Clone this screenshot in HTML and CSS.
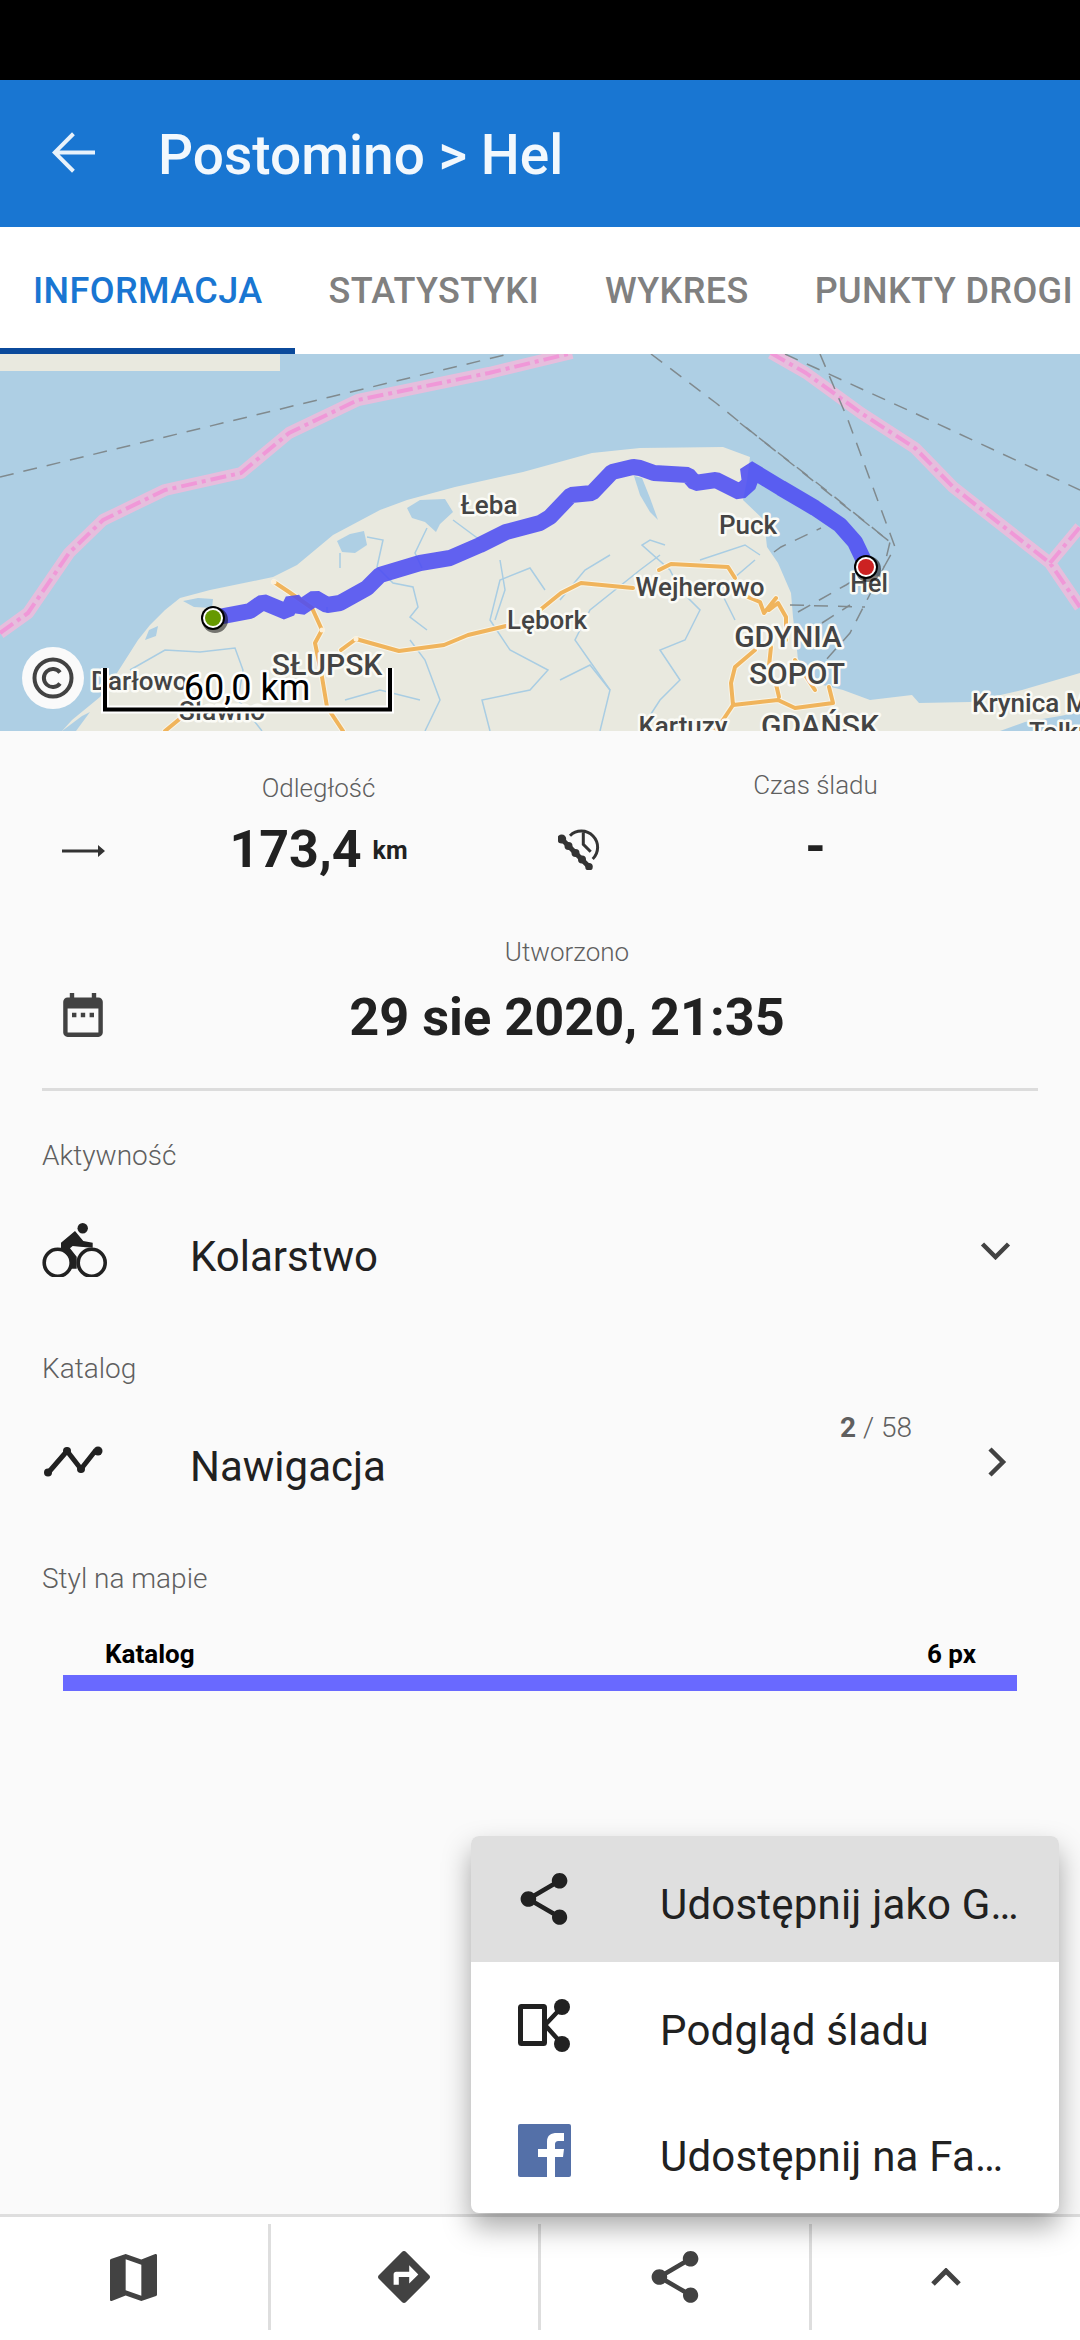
FILE: index.html
```html
<!DOCTYPE html>
<html lang="pl">
<head>
<meta charset="utf-8">
<title>Postomino > Hel</title>
<link rel="stylesheet" href="styles.css">
</head>
<body>
<div class="status"></div>
<header class="appbar">
  <svg class="back" viewBox="4 4 16 16"><path d="M20 11.250H6.800l5.700-5.700L11.450 4.500 4 12l7.450 7.500 1.050-1.050-5.700-5.700H20z"/></svg>
  <h1 class="title">Postomino &gt; Hel</h1>
</header>
<nav class="tabs">
  <div class="tab active">INFORMACJA</div>
  <div class="tab">STATYSTYKI</div>
  <div class="tab">WYKRES</div>
  <div class="tab">PUNKTY DROGI</div>
</nav>
<svg class="map" viewBox="0 354 1080 377">
  <defs>
    <g id="roads">
      <path d="M274 582L289 592 312 608 322 630 315 643 322 677 327 707 343 731"/>
      <path d="M341 650L356 639 399 651 444 645 468 635 506 626"/>
      <path d="M540 610L561 593 581 583 633 588"/>
      <path d="M659 570L671 564 728 567 735 578"/>
      <path d="M748 597L760 602 764 613 776 598M769 610L778 603 786 617 786 640"/>
      <path d="M755 650L735 667 731 683 733 705 760 702 778 700 795 708 833 703 829 687"/>
      <path d="M733 705L723 720 715 731"/>
      <path d="M771 647L768 675M779 697L775 680M795 660L815 690"/>
      <path d="M165 731L182 717"/>
    </g>
  </defs>
  <rect class="water" x="0" y="354" width="1080" height="377"/>
  <rect class="land" x="0" y="354" width="280" height="17"/>
  <path class="land" d="M62 731L72 720 100 697 117 673 138 640 150 625 165 610 180 598 210 590 273 577 297 565 333 535 380 510 407 500 455 487 523 472 592 453 640 448 723 447 750 457 747 480 743 500 764 520 767 547 778 563 791 593 793 617 797 650 798 660 815 683 843 690 870 700 912 695 919 703 970 702 1022 690 1080 673V731z"/>
  <g class="lake">
    <path d="M337 541L350 534 364 531 367 545 355 553 342 552z"/>
    <path d="M407 508L420 500 445 499 453 512 440 524 436 532 425 522 412 518z"/>
    <path d="M183 601L198 598 213 599 212 608 194 607z"/>
    <path d="M145 640L149 630 158 626 156 636z"/>
    <path d="M634 476L642 478 650 498 658 520 650 512 640 495z"/>
    <path d="M1000 731L1025 722 1060 716 1080 712V731z"/>
    <path d="M62 731L82 716 90 712 76 731z"/>
  </g>
  <g class="river">
    <path d="M130 670L165 650 200 652 235 648 243 670 238 700 262 731"/>
    <path d="M367 537L383 540 377 567 393 583 413 587 418 607 410 617 427 630"/>
    <path d="M427 528L415 553 422 568"/>
    <path d="M453 520L480 540"/>
    <path d="M340 553L340 568"/>
    <path d="M327 607L327 613"/>
    <path d="M425 731L440 700 425 660 410 640"/>
    <path d="M490 731L482 700 530 690 548 670 510 650 490 620 500 580 530 568 545 590"/>
    <path d="M600 731L610 690 575 640 590 610 640 570 660 555"/>
    <path d="M640 731L660 700 680 680 660 650 685 640 700 610 680 590 670 570 642 545 650 540 665 545"/>
    <path d="M560 600L585 570 610 555"/>
    <path d="M345 700L380 690 420 700"/>
    <path d="M560 680L590 665 610 690"/>
    <path d="M755 560L720 590 735 620"/>
    <path d="M500 560L505 590 495 620"/>
    <path d="M700 560L745 545 760 555"/>
  </g>
  <g class="boundary">
    <path class="edge" d="M0 633L28 613 69 553 103 520 165 490 241 473 289 433 358 400 489 373 572 353M771 353L806 373 861 413 915 448 953 487 1050 563 1080 607M1050 563L1080 527"/>
    <path class="core" d="M0 633L28 613 69 553 103 520 165 490 241 473 289 433 358 400 489 373 572 353M771 353L806 373 861 413 915 448 953 487 1050 563 1080 607M1050 563L1080 527"/>
  </g>
  <g class="sea-line">
    <path d="M0 477L330 397 513 353"/>
    <path d="M651 354L716 403 758 437 890 542"/>
    <path d="M740 423L826 490 890 542 884 567 850 633 826 660"/>
    <path d="M785 354L923 417 1080 490"/>
    <path d="M820 354L848 420 895 547 884 567"/>
    <path d="M774 552L781 547 821 528"/>
    <path d="M790 605L865 607"/>
    <path d="M798 612L846 585 870 570"/>
    <path d="M822 623L850 605"/>
  </g>
  <use class="road-halo" href="#roads"/>
  <use class="road" href="#roads"/>
  <circle class="road-dot" cx="274" cy="582" r="2.500"/>
  <circle class="road-dot" cx="322" cy="630" r="2.500"/>
  <circle class="road-dot" cx="356" cy="639" r="2.500"/>
  <path class="route" d="M213 618L250 611 263 602 287 612 293 600 300 608 315 598 327 605 340 603 367 588 380 575 420 563 450 558 480 545 506 532 540 523 550 517 571 495 592 493 612 472 633 467 640 468 654 473 688 475 695 483 716 480 740 492 750 483 748 468 781 488 815 508 840 525 855 542 866 565"/>
  <g class="label">
    <text class="m" x="489" y="514">Łeba</text>
    <text class="m" x="748" y="534">Puck</text>
    <text class="m low" x="869" y="592">Hel</text>
    <text class="m" x="700" y="596">Wejherowo</text>
    <text class="m" x="547" y="629">Lębork</text>
    <text class="m huge" x="788" y="647">GDYNIA</text>
    <text class="m huge" x="797" y="684">SOPOT</text>
    <text class="m huge" x="820" y="736">GDAŃSK</text>
    <text class="m" x="683" y="735">Kartuzy</text>
    <text class="s" x="972" y="712">Krynica Morska</text>
    <text class="s" x="1029" y="741">Tolkmicko</text>
    <text class="m huge" x="327" y="675">SŁUPSK</text>
    <text class="s" x="91" y="690">Darłowo</text>
    <text class="m" x="222" y="720">Sławno</text>
  </g>
  <g>
    <circle class="pin-shadow" cx="215" cy="620" r="13"/>
    <circle class="pin-ring" cx="213" cy="618" r="12"/>
    <circle class="pin-white" cx="213" cy="618" r="10"/>
    <circle class="pin-start" cx="213" cy="618" r="8"/>
    <circle class="pin-shadow" cx="868" cy="569" r="13"/>
    <circle class="pin-ring" cx="866" cy="567" r="12"/>
    <circle class="pin-white" cx="866" cy="567" r="10"/>
    <circle class="pin-end" cx="866" cy="567" r="8"/>
  </g>
  <path class="scale-halo" d="M105 668V709.500H390V668"/>
  <path class="scale-line" d="M105 668V709.500H390V668"/>
  <text class="scale-text" x="247" y="700">60,0 km</text>
  <circle class="copy-bg" cx="53" cy="678" r="31"/>
  <circle class="copy-ring" cx="53" cy="678" r="18.500"/>
  <path class="copy-c" d="M60 672.500A9 9 0 1 0 60 683.500"/>
</svg>
<main class="content">
  <section class="stats">
    <div class="stat">
      <svg class="ic-arrow" viewBox="0 0 43 12"><path d="M0 4.500h36V0l7 6-7 6V7.500H0z"/></svg>
      <div class="stat-body">
        <div class="cap mid">Odległość</div>
        <div class="value">173,4<span class="unit">km</span></div>
      </div>
    </div>
    <div class="stat stat-time">
      <svg class="ic-clock" viewBox="0 0 45 44"><path class="thin" d="M12 9.700A16 16 0 1 1 34.700 33M25.300 6.300V18.300L32.700 25.700"/><path class="wave" d="M3.700 13L31 40.700"/><circle cx="3.700" cy="13" r="4.500"/><circle cx="10.500" cy="20" r="4"/><circle cx="17.500" cy="27" r="4"/><circle cx="24" cy="33.500" r="4"/><circle cx="31" cy="40.700" r="3.800"/></svg>
      <div class="stat-body">
        <div class="cap mid">Czas śladu</div>
        <div class="value">-</div>
      </div>
    </div>
  </section>
  <section class="created">
    <svg class="ic-cal" viewBox="3 1 18 20"><path d="M19 3h-1V1h-2v2H8V1H6v2H5c-1.110 0-1.990.9-1.990 2L3 19c0 1.100.89 2 2 2h14c1.100 0 2-.9 2-2V5c0-1.100-.9-2-2-2zm0 16H5V8h14v11zM7 10h2v2H7zM11 10h2v2h-2zM15 10h2v2h-2z"/></svg>
    <div class="stat-body wide">
      <div class="cap mid">Utworzono</div>
      <div class="value">29 sie 2020, 21:35</div>
    </div>
  </section>
  <hr class="rule">
  <div class="cap left first">Aktywność</div>
  <div class="row row-a">
    <svg class="ic-bike" viewBox="0 0 66 54"><circle cx="15.700" cy="39.700" r="13.500"/><circle cx="49.700" cy="39.700" r="13.500"/><path class="solid" d="M19 19.700L33 8 41.300 18 50.700 19.700V24.700L38 23.700 30.700 23 28 25.300 34.700 33.700V45.700H28.700V36.300L19 24.700z"/><circle class="solid" cx="40.700" cy="5.200" r="5.200"/></svg>
    <span class="row-text">Kolarstwo</span>
    <svg class="chev" viewBox="0 0 30 18"><path d="M2 2L15 15 28 2"/></svg>
  </div>
  <div class="cap left">Katalog</div>
  <div class="row row-b">
    <svg class="ic-track" viewBox="0 0 59 31"><path d="M4 27L23 5 37 23 52 4"/><circle cx="4" cy="26.500" r="4"/><circle cx="23" cy="5" r="4"/><circle cx="37" cy="23" r="4"/><circle cx="54" cy="5" r="4.500"/></svg>
    <span class="row-text">Nawigacja</span>
    <span class="count"><b>2</b> / 58</span>
    <svg class="chev-r" viewBox="0 0 20 30"><path d="M3 2L16 15 3 28"/></svg>
  </div>
  <div class="cap left">Styl na mapie</div>
  <div class="style-head"><span>Katalog</span><span>6 px</span></div>
  <div class="style-bar"></div>
</main>
<footer class="bottom">
  <div class="cell"><svg class="ic-b" viewBox="3 3 18 18"><path d="M20.500 3l-.16.03L15 5.100 9 3 3.360 4.900c-.21.07-.36.25-.36.48V20.500c0 .28.22.5.5.5l.16-.03L9 18.900l6 2.100 5.640-1.900c.21-.07.36-.25.36-.48V3.500c0-.28-.22-.5-.5-.5zM15 19l-6-2.110V5l6 2.110V19z"/></svg></div>
  <div class="cell"><svg class="ic-d" viewBox="2 2 20 20"><path d="M21.710 11.290l-9-9c-.39-.39-1.020-.39-1.410 0l-9 9c-.39.39-.39 1.020 0 1.410l9 9c.39.39 1.020.39 1.410 0l9-9c.39-.38.39-1.010 0-1.410zM14 14.500V12h-4v3H8v-4c0-.55.45-1 1-1h5V7.500l3.500 3.500-3.500 3.500z"/></svg></div>
  <div class="cell"><svg class="ic-s" viewBox="3 2 18 20"><path d="M18 16.080c-.76 0-1.440.3-1.960.77L8.910 12.700c.05-.23.09-.46.09-.7s-.04-.47-.09-.7l7.050-4.110c.54.5 1.250.81 2.040.81 1.660 0 3-1.340 3-3s-1.340-3-3-3-3 1.340-3 3c0 .24.04.47.09.7L8.040 9.810C7.500 9.310 6.790 9 6 9c-1.660 0-3 1.340-3 3s1.340 3 3 3c.79 0 1.500-.31 2.040-.81l7.120 4.160c-.05.21-.08.43-.08.65 0 1.610 1.310 2.920 2.920 2.920 1.610 0 2.920-1.310 2.920-2.920s-1.310-2.920-2.920-2.920z"/></svg></div>
  <div class="cell"><svg class="chev-u" viewBox="0 0 30 18"><path d="M2 16L15 3 28 16"/></svg></div>
</footer>
<div class="menu">
  <div class="item on">
    <svg class="ic-s menu-ic" viewBox="3 2 18 20"><path d="M18 16.080c-.76 0-1.440.3-1.960.77L8.910 12.700c.05-.23.09-.46.09-.7s-.04-.47-.09-.7l7.050-4.110c.54.5 1.250.81 2.040.81 1.660 0 3-1.340 3-3s-1.340-3-3-3-3 1.340-3 3c0 .24.04.47.09.7L8.040 9.810C7.500 9.310 6.790 9 6 9c-1.660 0-3 1.340-3 3s1.340 3 3 3c.79 0 1.500-.31 2.040-.81l7.120 4.160c-.05.21-.08.43-.08.65 0 1.610 1.310 2.920 2.920 2.920 1.610 0 2.920-1.310 2.920-2.920s-1.310-2.920-2.920-2.920z"/></svg>
    <span>Udostępnij jako G…</span>
  </div>
  <div class="item">
    <svg class="ic-m" viewBox="0 0 53 53"><rect x="2.500" y="7.500" width="24" height="37" rx="1"/><path d="M27 26L44 8M27 26L44 45"/><circle cx="44" cy="8" r="8"/><circle cx="44" cy="45" r="8"/></svg>
    <span>Podgląd śladu</span>
  </div>
  <div class="item">
    <svg class="ic-m ic-fb" viewBox="0 0 53 53"><rect class="fb-bg" width="53" height="53" rx="2"/><path class="fb-f" d="M29 53V33H20V25H29V18C29 11 33 9 39 9H46V17H41C38 17 37 18 37 21V25H46L45 33H37V53z"/></svg>
    <span>Udostępnij na Fa…</span>
  </div>
</div>
</body>
</html>
```
FILE: styles.css
```css
* { box-sizing: border-box; }
html, body { margin: 0; padding: 0; }
body {
  position: relative;
  width: 1080px;
  height: 2340px;
  overflow: hidden;
  display: flex;
  flex-direction: column;
  background: #fafafa;
  font-family: Roboto, "Noto Sans", sans-serif;
  color: #212121;
}
.status { height: 80px; background: #000; flex: none; }
.appbar {
  height: 147px;
  flex: none;
  display: flex;
  align-items: center;
  padding-left: 52px;
  background: #1976d2;
}
.back { width: 43px; height: 43px; fill: #e8f2fb; margin-top: -2px; }
.title {
  margin: 2px 0 0 63px;
  font-size: 55px;
  font-weight: 500;
  line-height: 60px;
  color: #f2f8fd;
}
.tabs {
  height: 127px;
  flex: none;
  display: flex;
  background: #fff;
  overflow: hidden;
}
.tab {
  flex: none;
  height: 127px;
  padding: 0 33px;
  display: flex;
  align-items: center;
  font-size: 36px;
  letter-spacing: .4px;
  font-weight: 500;
  color: #808080;
  white-space: nowrap;
}
.tab.active { color: #1976d2; border-bottom: 6px solid #0b4a9b; padding-top: 6px; }
.map { display: block; width: 1080px; height: 377px; flex: none; }
.water { fill: #aecfe4; }
.land { fill: #e9e9df; }
.lake path { fill: #aecfe4; }
.river path { fill: none; stroke: #a9cde3; stroke-width: 1.500; }
.boundary path { fill: none; stroke-linejoin: round; }
.edge { stroke: #e6bedd; stroke-width: 12; }
.core { stroke: #f098d8; stroke-width: 4; stroke-dasharray: 16 5 4 5; }
.sea-line path { fill: none; stroke: #808a8e; stroke-width: 1.500; stroke-dasharray: 14 10; }
.road-halo { fill: none; stroke: #f7f4e8; stroke-width: 6; stroke-linejoin: round; stroke-linecap: round; }
.road { fill: none; stroke: #f0b45c; stroke-width: 4; stroke-linejoin: round; stroke-linecap: round; }
.road-dot { fill: #fdf0d8; }
.route { fill: none; stroke: #4d4df2; stroke-opacity: .88; stroke-width: 16; stroke-linejoin: bevel; }
.label text {
  font-family: Roboto, sans-serif;
  font-size: 26px;
  font-weight: 500;
  fill: #444;
  stroke: #fbfbf6;
  stroke-width: 5px;
  stroke-linejoin: round;
  paint-order: stroke;
}
.label .m { text-anchor: middle; }
.label .s { text-anchor: start; }
.label .low { font-size: 25px; }
.label .huge { font-size: 30px; }
.pin-shadow { fill: #000; opacity: .5; }
.pin-ring { fill: #000; }
.pin-white { fill: #fff; }
.pin-start { fill: #669900; }
.pin-end { fill: #cc2222; }
.scale-halo { fill: none; stroke: #fff; stroke-width: 8; }
.scale-line { fill: none; stroke: #000; stroke-width: 4; }
.scale-text {
  font-family: Roboto, sans-serif;
  font-size: 36px;
  text-anchor: middle;
  fill: #000;
  stroke: #fff;
  stroke-width: 5px;
  stroke-linejoin: round;
  paint-order: stroke;
}
.copy-bg { fill: #fafafa; }
.copy-ring, .copy-c { fill: none; stroke: #424242; stroke-width: 4; }
.content { flex: 1; padding: 0 42px; min-height: 0; }
.stats { display: flex; align-items: flex-start; gap: 26px; padding: 40px 0 0 20px; }
.stat { display: flex; align-items: flex-start; }
.stat-time { margin-top: -3px; }
.stat-body { width: 427px; text-align: center; }
.stat-body.wide { width: 924px; }
.cap { font-size: 28px; line-height: 34px; font-weight: 300; color: #5f5f5f; }
.cap.mid { font-size: 26px; }
.cap.left { margin-top: 65px; }
.cap.first { margin-top: 48px; }
.value { font-size: 52px; line-height: 60px; font-weight: 700; margin-top: 15px; color: #212121; }
.wide .value { margin-top: 18px; font-size: 52.300px; }
.unit { font-size: 25px; line-height: 1; margin-left: 11px; position: relative; top: -8px; }
.ic-arrow { width: 43px; height: 12px; fill: #333; margin-top: 74px; flex: none; }
.ic-clock { width: 45px; height: 44px; flex: none; margin-top: 58px; fill: #333; stroke: none; margin-right: -1px; }
.ic-clock .thin { fill: none; stroke: #333; stroke-width: 3; }
.ic-clock .wave { fill: none; stroke: #333; stroke-width: 5; }
.created { display: flex; align-items: flex-start; padding: 55px 0 0 21px; }
.ic-cal { width: 40px; height: 44px; fill: #424242; margin: 58px 2px 0 0; flex: none; }
.rule { border: 0; height: 3px; background: #dcdcdc; margin: 41px 0 0; }
.row { display: flex; align-items: center; height: 60px; padding-right: 27px; }
.row-a { margin-top: 54px; }
.row-b { margin-top: 51px; }
.row-text { font-size: 42px; line-height: 60px; margin-left: 85px; color: #212121; }
.row-a .row-text { margin-left: 82px; margin-right: auto; }
.row-b .row-text { margin-left: 87px; margin-right: auto; }
.ic-bike { width: 66px; height: 54px; flex: none; margin-bottom: 14px; fill: none; stroke: #212121; stroke-width: 3.600; }
.ic-bike .solid { fill: #212121; stroke: none; }
.ic-track { width: 59px; height: 31px; margin: 0 0 12px 2px; flex: none; fill: #212121; }
.ic-track path { fill: none; stroke: #212121; stroke-width: 5; }
.chev { width: 31px; height: 18px; fill: none; stroke: #424242; stroke-width: 4.500; margin-bottom: 12px; }
.chev-r { width: 20px; height: 30px; fill: none; stroke: #424242; stroke-width: 4.500; margin: 0 4px 10px 0; }
.count { align-self: flex-start; margin: -26px 75px 0 0; font-size: 28px; line-height: 34px; font-weight: 300; color: #5f5f5f; }
.count b { font-weight: 700; }
.style-head {
  display: flex;
  justify-content: space-between;
  margin-top: 43px;
  padding: 0 62px 0 63px;
  font-size: 26px;
  line-height: 30px;
  font-weight: 700;
  color: #000;
}
.style-bar { height: 16px; margin: 6px 21px 0; background: #6969ff; }
.bottom {
  height: 126px;
  flex: none;
  display: flex;
  background: #fff;
  border-top: 3px solid #dedede;
  padding: 7px 0 10px;
}
.cell { width: 270.500px; display: flex; align-items: center; justify-content: center; border-right: 3px solid #dedede; }
.cell:last-child { flex: 1; border-right: 0; }
.ic-b { width: 47px; height: 47px; fill: #424242; }
.ic-d { width: 52px; height: 52px; fill: #424242; }
.ic-s { width: 48px; height: 52px; fill: #424242; }
.chev-u { width: 30px; height: 18px; fill: none; stroke: #424242; stroke-width: 5; }
.menu {
  position: absolute;
  left: 471px;
  top: 1836px;
  width: 588px;
  background: #fff;
  border-radius: 8px;
  overflow: hidden;
  box-shadow: 0 14px 28px rgba(0,0,0,.34);
}
.item {
  height: 125.700px;
  display: flex;
  align-items: center;
  padding-left: 47px;
  font-size: 42px;
  letter-spacing: .2px;
  color: #212121;
  white-space: nowrap;
}
.item span { margin-left: 89px; position: relative; top: 6px; }
.item.on { background: #dfdfdf; }
.menu-ic { fill: #212121; margin-left: 2px; margin-right: 3px; margin-top: 1px; }
.ic-m { width: 53px; height: 53px; margin-top: 1px; fill: #212121; stroke: none; }
.ic-m rect { fill: none; stroke: #212121; stroke-width: 5; }
.ic-m path { fill: none; stroke: #212121; stroke-width: 4.500; }
.ic-fb .fb-bg { fill: #5470a8; stroke: none; }
.ic-fb .fb-f { fill: #fff; stroke: none; }
```
